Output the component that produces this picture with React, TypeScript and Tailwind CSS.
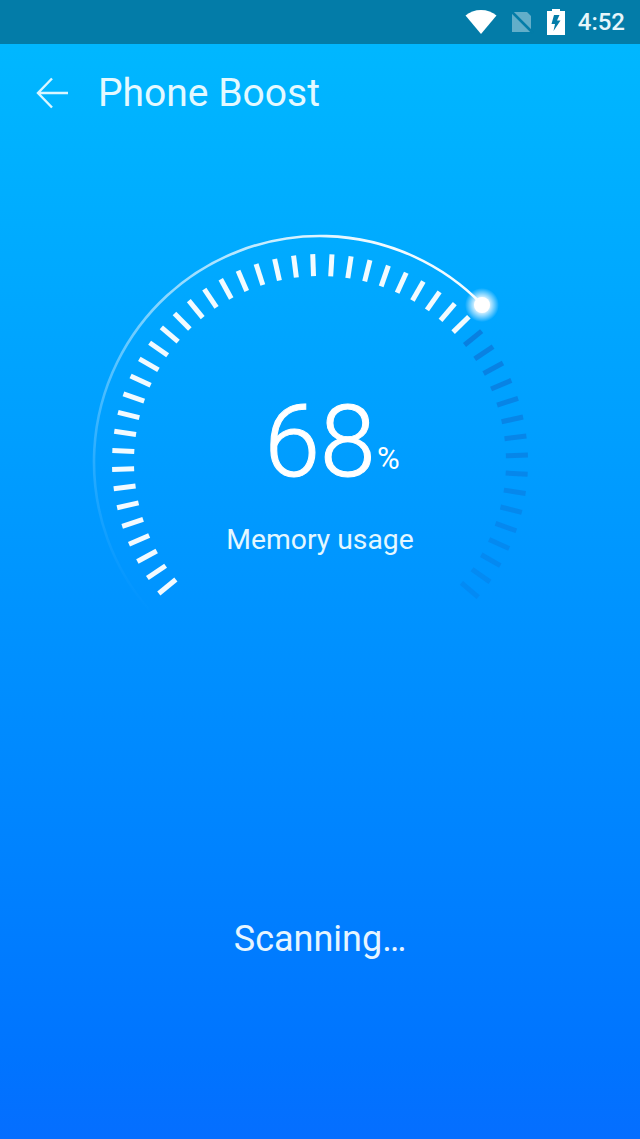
/**
 * Phone Boost scan screen: status bar, title row, memory gauge and scan label.
 */

const CENTER_X = 230;
const CENTER_Y = 242;
const TICK_STEP = 5.3;

function polar(angle: number, radius: number) {
  const rad = (angle * Math.PI) / 180;
  return { x: CENTER_X + radius * Math.sin(rad), y: CENTER_Y - radius * Math.cos(rad) };
}

const tickAngles = Array.from({ length: 50 }, (_, i) => -129.2 + i * TICK_STEP);

function Gauge() {
  const arcStart = polar(-131, 226);
  const arcEnd = polar(45.9, 226);

  return (
    <svg width="460" height="400" viewBox="0 0 460 400" fill="none">
      <defs>
        <linearGradient id="arcFade" gradientUnits="userSpaceOnUse" x1="30" y1="370" x2="300" y2="30">
          <stop offset="0" stopColor="#fff" stopOpacity="0" />
          <stop offset="0.3" stopColor="#fff" stopOpacity="0.25" />
          <stop offset="0.7" stopColor="#fff" stopOpacity="0.65" />
          <stop offset="1" stopColor="#fff" stopOpacity="0.95" />
        </linearGradient>
        <radialGradient id="dotGlow">
          <stop offset="0.4" stopColor="#fff" stopOpacity="0.9" />
          <stop offset="1" stopColor="#fff" stopOpacity="0" />
        </radialGradient>
      </defs>
      <path
        d={`M ${arcStart.x} ${arcStart.y} A 226 226 0 0 1 ${arcEnd.x} ${arcEnd.y}`}
        stroke="url(#arcFade)"
        strokeWidth="2.6"
      />
      {tickAngles.map((angle) => {
        const from = polar(angle, 186);
        const to = polar(angle, 208);
        const isFilled = angle < 46.5;
        const fade = isFilled ? 0.95 : 0.62 - ((angle - 46.5) / 84) * 0.4;
        return (
          <line
            key={angle}
            x1={from.x}
            y1={from.y}
            x2={to.x}
            y2={to.y}
            stroke={isFilled ? "#ffffff" : "#0f68cc"}
            strokeOpacity={fade}
            strokeWidth="5"
          />
        );
      })}
      <circle cx="392" cy="85" r="17" fill="url(#dotGlow)" />
      <circle cx="392" cy="85" r="8" fill="#ffffff" />
    </svg>
  );
}

export default function App() {
  return (
    <div className="flex h-[1139px] w-[640px] flex-col overflow-hidden bg-gradient-to-b from-[#00baff] to-[#056eff] font-['Roboto',sans-serif] text-white">
      <div className="flex h-[44px] items-center justify-end gap-[13px] bg-[#037ca8] pr-[15px]">
        <svg width="32" height="26" viewBox="0 0 32 26">
          <path d="M16 25 L0.5 6.5 C4.5 3 10 1 16 1 C22 1 27.5 3 31.5 6.5 Z" fill="#fff" />
        </svg>
        <svg width="24" height="24" viewBox="0 0 24 24">
          <path d="M2 2 H17 L21 6 V22 H2 Z" fill="#fff" fillOpacity="0.38" />
          <path d="M1 1 L23 23" stroke="#037ca8" strokeWidth="2.5" />
        </svg>
        <svg width="18" height="26" viewBox="0 0 18 26">
          <path
            d="M5 0 H13 V2 H18 V26 H0 V2 H5 Z M7 6 L4.5 15 H8 L6.5 22 L13.5 11.5 H10 L12.5 6 Z"
            fill="#fff"
            fillRule="evenodd"
          />
        </svg>
        <span className="text-[24px] leading-none font-medium text-[#e6f6fb]">4:52</span>
      </div>

      <div className="flex h-[98px] items-center pl-[36px]">
        <svg width="33" height="32" viewBox="0 0 33 32" fill="none" stroke="#d9f6ff" strokeWidth="2.4">
          <path d="M32 16 H2 M16 1.5 L2 16 L16 30.5" />
        </svg>
        <span className="ml-[29px] text-[39px] leading-none text-[#e4f9ff]">Phone Boost</span>
      </div>

      <div className="relative mt-[78px] h-[400px] w-[460px] self-center">
        <Gauge />
        <div className="absolute inset-x-0 top-[172px] flex flex-col items-center">
          <span className="text-[100px] leading-[100px] font-light [-webkit-text-stroke:1px_white]">68</span>
          <span className="absolute left-[287px] top-[51px] text-[31px] leading-none">%</span>
          <span className="mt-[32px] text-[28.3px] leading-[32px] text-[#e4f7ff]">Memory usage</span>
        </div>
      </div>

      <div className="mt-[299px] text-center text-[36px] leading-[40px] text-[#e6f5ff]">Scanning…</div>
    </div>
  );
}
